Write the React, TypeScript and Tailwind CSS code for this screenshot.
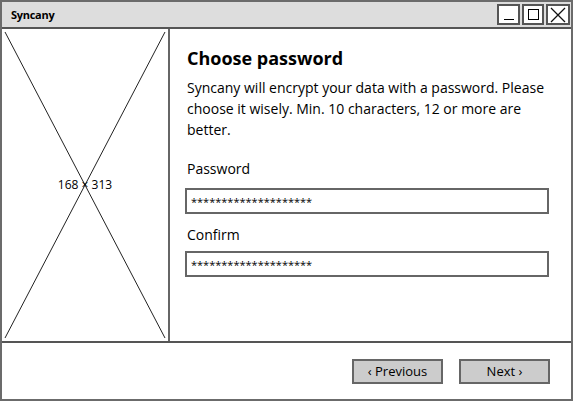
import React from "react";

const font = { fontFamily: '"Comic Sans MS", "Open Sans", "DejaVu Sans", sans-serif' };

export default function App() {
  return (
    <div className="w-[574px] h-[402px] bg-white relative overflow-hidden" style={font}>
      <div className="w-[573px] h-[401px] border-2 border-[#6b6b6b] flex flex-col bg-white">
        {/* title bar */}
        <div className="h-[27px] bg-[#dddddd] border-b-2 border-[#555] flex items-center shrink-0">
          <span className="ml-[9px] text-[11px] font-bold text-black leading-none tracking-tight">Syncany</span>
          <div className="ml-auto mr-[1px] flex gap-[2px] items-center">
            <div className="w-[23px] h-[21px] border-2 border-[#555] bg-white flex items-end justify-center pb-[3px]">
              <div className="w-[10px] h-[1.5px] bg-black" />
            </div>
            <div className="w-[22px] h-[21px] border-2 border-[#555] bg-white flex items-center justify-center">
              <div className="w-[11px] h-[11px] border-[1.5px] border-black" />
            </div>
            <div className="w-[24px] h-[21px] border-2 border-[#555] bg-white flex items-center justify-center">
              <svg width="16" height="16" viewBox="0 0 16 16">
                <path d="M1 1 L15 15 M15 1 L1 15" stroke="#111" strokeWidth="1.3" fill="none" />
              </svg>
            </div>
          </div>
        </div>
        {/* body */}
        <div className="flex h-[314px] border-b-2 border-[#555] shrink-0">
          <div className="w-[168px] h-[312px] border-r-2 border-[#666] relative shrink-0">
            <svg className="absolute inset-0" width="166" height="312" viewBox="0 0 166 312">
              <path d="M3 3 L163 309 M163 3 L3 309" stroke="#222" strokeWidth="1" fill="none" />
            </svg>
            <div className="absolute inset-0 flex items-center justify-center">
              <span className="text-[12px] text-black bg-transparent leading-none">168 × 313</span>
            </div>
          </div>
          <div className="flex-1 flex flex-col pl-[17px] pt-[17px]">
            <div className="text-[18px] font-bold text-black leading-[24px]">Choose password</div>
            <div className="mt-[7px] text-[14px] text-black leading-[21px] w-[372px]">
              Syncany will encrypt your data with a password. Please choose it wisely. Min. 10 characters, 12 or more are better.
            </div>
            <div className="mt-[19px] text-[14px] text-black leading-[20px]">Password</div>
            <div className="mt-[9px] -ml-[2px] w-[364px] h-[26px] border-2 border-[#666] flex items-center px-[4px] text-[11px] text-black leading-none">
              ********************
            </div>
            <div className="mt-[11px] text-[14px] text-black leading-[20px]">Confirm</div>
            <div className="mt-[6px] -ml-[2px] w-[364px] h-[26px] border-2 border-[#666] flex items-center px-[4px] text-[11px] text-black leading-none">
              ********************
            </div>
          </div>
        </div>
        {/* footer */}
        <div className="flex-1 flex items-start justify-end pr-[21px] pt-[16px] gap-[16px]">
          <button className="w-[91px] h-[25px] bg-[#cccccc] border-2 border-[#666] text-[13px] text-black flex items-center justify-center leading-none">
            ‹ Previous
          </button>
          <button className="w-[91px] h-[25px] bg-[#cccccc] border-2 border-[#666] text-[13px] text-black flex items-center justify-center leading-none">
            Next ›
          </button>
        </div>
      </div>
    </div>
  );
}
